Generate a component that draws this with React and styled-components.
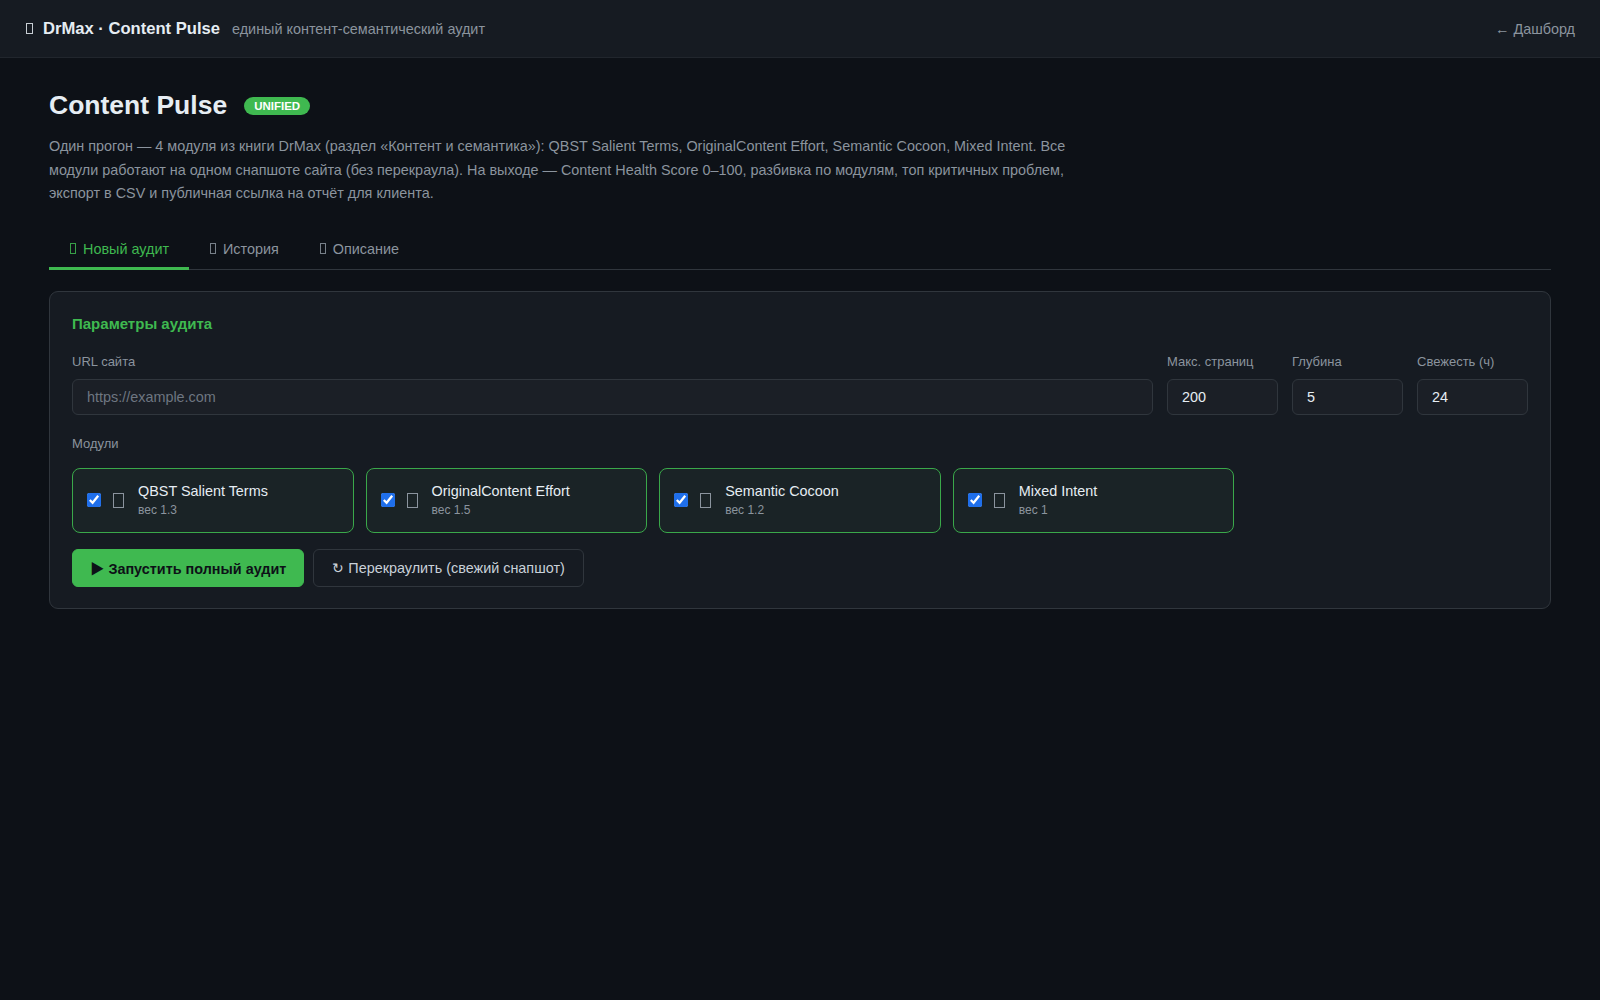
import { useState } from "react";
import styled, { createGlobalStyle } from "styled-components";

const GlobalStyle = createGlobalStyle`
    * { box-sizing: border-box; }
    body {
        margin: 0;
        background: #0d1117;
        color: #c9d1d9;
        font-family: "Liberation Sans", Arial, "Noto Sans CJK SC", sans-serif;
    }
`

const Page = styled.div`
    min-height: 1000px;
    background: #0d1117;
`

const TopBar = styled.header`
    display: flex;
    align-items: center;
    justify-content: space-between;
    height: 58px;
    padding: 0 25px 0 26px;
    background: #161b22;
    border-bottom: 1px solid #21262d;
`

const Brand = styled.div`
    display: flex;
    align-items: baseline;
    gap: 12px;
`

const BrandName = styled.span`
    display: flex;
    align-items: center;
    font-size: 16.6px;
    font-weight: 700;
    color: #e6edf3;
`

const BrandSub = styled.span`
    font-size: 14.4px;
    color: #8b949e;
`

// missing-glyph box, the way the emoji show up on the original page
const Tofu = styled.span`
    display: inline-block;
    flex-shrink: 0;
    width: ${p => p.$w || 6}px;
    height: ${p => p.$h || 11}px;
    margin-right: ${p => p.$gap ?? 10}px;
    border: 1px solid currentColor;
    opacity: 0.85;
`

const BackLink = styled.a`
    font-size: 14.4px;
    color: #8b949e;
    text-decoration: none;
    cursor: pointer;
`

const Main = styled.main`
    padding: 32px 49px;
`

const TitleRow = styled.div`
    display: flex;
    align-items: center;
    gap: 17px;
`

const Title = styled.h1`
    margin: 0;
    font-size: 26.5px;
    font-weight: 700;
    color: #e6edf3;
`

const Badge = styled.span`
    display: inline-block;
    padding: 3px 10px;
    border-radius: 10px;
    background: #3fb950;
    color: #ffffff;
    font-size: 11.5px;
    font-weight: 700;
    line-height: 12px;
`

const Lead = styled.p`
    max-width: 1060px;
    margin: 14px 0 0;
    font-size: 14.4px;
    line-height: 23.5px;
    color: #8b949e;
`

const Tabs = styled.div`
    display: flex;
    margin-top: 25px;
    border-bottom: 1px solid #30363d;
`

const Tab = styled.button`
    display: flex;
    align-items: center;
    padding: 10px 20px 10px 21px;
    margin-bottom: -1px;
    border: 0;
    border-bottom: 3px solid ${p => (p.$active ? "#3fb950" : "transparent")};
    background: none;
    color: ${p => (p.$active ? "#3fb950" : "#8b949e")};
    font-family: inherit;
    font-size: 14.4px;
    cursor: pointer;
`

const Card = styled.section`
    margin-top: 21px;
    padding: 23px 22px 21px;
    background: #161b22;
    border: 1px solid #30363d;
    border-radius: 9px;
`

const CardTitle = styled.h3`
    margin: 0 0 22px;
    font-size: 15px;
    font-weight: 700;
    color: #3fb950;
`

const FieldGrid = styled.div`
    display: grid;
    grid-template-columns: 1fr 111px 111px 111px;
    gap: 14px;
`

const Field = styled.label`
    display: flex;
    flex-direction: column;
    gap: 10px;
`

const Label = styled.span`
    font-size: 13px;
    color: #8b949e;
`

const Input = styled.input`
    height: 36px;
    padding: 0 14px;
    background: #1b1f26;
    border: 1px solid #30363d;
    border-radius: 6px;
    color: #e6edf3;
    font-family: inherit;
    font-size: 14.4px;
    outline: none;
    &::placeholder { color: #6e7681; }
`

const SectionLabel = styled.div`
    margin: 21px 0 17px;
    font-size: 13px;
    color: #8b949e;
`

const ModuleGrid = styled.div`
    display: grid;
    grid-template-columns: repeat(auto-fill, minmax(260px, 1fr));
    gap: 12px;
`

const ModuleCard = styled.label`
    display: flex;
    align-items: center;
    height: 65px;
    padding: 0 14px;
    background: ${p => (p.$on ? "#1a2326" : "#161b22")};
    border: 1px solid ${p => (p.$on ? "#3aa84a" : "#30363d")};
    border-radius: 8px;
    cursor: pointer;
`

const Check = styled.input`
    width: 14px;
    height: 14px;
    margin: 0 12px 0 0;
    accent-color: #1f6feb;
`

const ModuleIcon = styled(Tofu)`
    color: #8b949e;
    opacity: 1;
`

const ModuleText = styled.div`
    display: flex;
    flex-direction: column;
    gap: 4px;
`

const ModuleName = styled.span`
    font-size: 14.4px;
    color: #e6edf3;
`

const ModuleWeight = styled.span`
    font-size: 12px;
    color: #8b949e;
`

const Actions = styled.div`
    display: flex;
    gap: 9px;
    margin-top: 16px;
`

const Button = styled.button`
    height: 38px;
    padding: 0 ${p => (p.$primary ? 17 : 18)}px;
    border-radius: 6px;
    font-family: inherit;
    font-size: 14.4px;
    cursor: pointer;
    background: ${p => (p.$primary ? "#3fb950" : "#161b22")};
    color: ${p => (p.$primary ? "#0d1117" : "#c9d1d9")};
    font-weight: ${p => (p.$primary ? 700 : 400)};
    border: 1px solid ${p => (p.$primary ? "#3fb950" : "#30363d")};
`

const modules = [
    { id: "qbst", name: "QBST Salient Terms", weight: "1.3" },
    { id: "effort", name: "OriginalContent Effort", weight: "1.5" },
    { id: "cocoon", name: "Semantic Cocoon", weight: "1.2" },
    { id: "intent", name: "Mixed Intent", weight: "1" },
];

const tabs = [
    { id: "new", label: "Новый аудит" },
    { id: "history", label: "История" },
    { id: "about", label: "Описание" },
];

export default function App() {
    const [tab, setTab] = useState("new");
    const [checked, setChecked] = useState({ qbst: true, effort: true, cocoon: true, intent: true });

    const toggle = (id) => {
        setChecked(c => ({ ...c, [id]: !c[id] }));
    }

    return (
        <Page>
            <GlobalStyle />
            <TopBar>
                <Brand>
                    <BrandName><Tofu $w={7} $gap={10} />DrMax · Content Pulse</BrandName>
                    <BrandSub>единый контент-семантический аудит</BrandSub>
                </Brand>
                <BackLink>← Дашборд</BackLink>
            </TopBar>

            <Main>
                <TitleRow>
                    <Title>Content Pulse</Title>
                    <Badge>UNIFIED</Badge>
                </TitleRow>
                <Lead>
                    Один прогон — 4 модуля из книги DrMax (раздел «Контент и семантика»): QBST Salient Terms, OriginalContent Effort, Semantic Cocoon, Mixed Intent. Все модули работают на одном снапшоте сайта (без перекраула). На выходе — Content Health Score 0–100, разбивка по модулям, топ критичных проблем, экспорт в CSV и публичная ссылка на отчёт для клиента.
                </Lead>

                <Tabs>
                    {tabs.map(t => (
                        <Tab key={t.id} $active={tab === t.id} onClick={() => setTab(t.id)}>
                            <Tofu $w={6} $h={11} $gap={7} />{t.label}
                        </Tab>
                    ))}
                </Tabs>

                <Card>
                    <CardTitle>Параметры аудита</CardTitle>
                    <FieldGrid>
                        <Field>
                            <Label>URL сайта</Label>
                            <Input placeholder="https://example.com" />
                        </Field>
                        <Field>
                            <Label>Макс. страниц</Label>
                            <Input defaultValue="200" />
                        </Field>
                        <Field>
                            <Label>Глубина</Label>
                            <Input defaultValue="5" />
                        </Field>
                        <Field>
                            <Label>Свежесть (ч)</Label>
                            <Input defaultValue="24" />
                        </Field>
                    </FieldGrid>

                    <SectionLabel>Модули</SectionLabel>
                    <ModuleGrid>
                        {modules.map(m => (
                            <ModuleCard key={m.id} $on={checked[m.id]}>
                                <Check type="checkbox" checked={checked[m.id]} onChange={() => toggle(m.id)} />
                                <ModuleIcon $w={11} $h={15} $gap={14} />
                                <ModuleText>
                                    <ModuleName>{m.name}</ModuleName>
                                    <ModuleWeight>вес {m.weight}</ModuleWeight>
                                </ModuleText>
                            </ModuleCard>
                        ))}
                    </ModuleGrid>

                    <Actions>
                        <Button $primary>▶ Запустить полный аудит</Button>
                        <Button>↻ Перекраулить (свежий снапшот)</Button>
                    </Actions>
                </Card>
            </Main>
        </Page>
    );
}
